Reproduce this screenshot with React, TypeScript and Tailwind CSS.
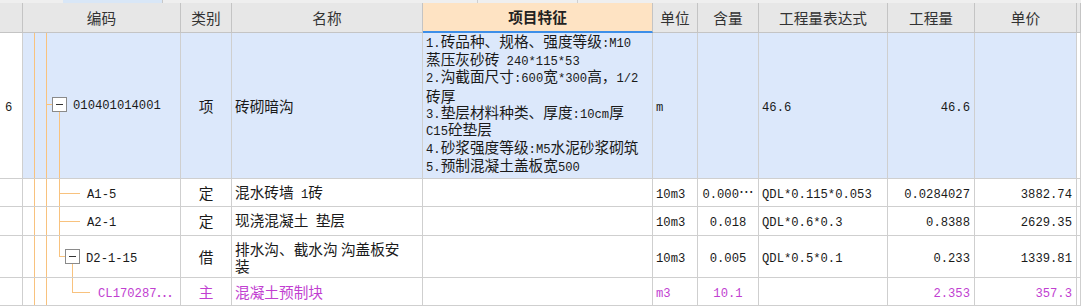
import React from 'react'

const ORANGE = '#f8c27e'

// ASCII runs in a narrow mono face, CJK in Noto Sans CJK, like SimSun's half/full widths
const Tx = ({ s }: { s: string }) => (
    <span>
        {s.split(/([\x20-\x7e]+)/).map((p, i) =>
            /^[\x20-\x7e]+$/.test(p) ? (
                <span key={i} className="font-['Liberation_Mono'] text-[12.2px] whitespace-pre">
                    {p}
                </span>
            ) : (
                <span key={i}>{p}</span>
            )
        )}
    </span>
)

const head = 'border-r border-b border-[#c4c4c4] bg-[#e7e7e7] flex items-center justify-center text-[#333]'
const cell = 'border-r border-b border-[#cfcfcf] flex items-center overflow-hidden whitespace-nowrap'

const Box = ({ x, y }: { x: number; y: number }) => (
    <>
        <rect x={x + 0.5} y={y + 0.5} width={14} height={14} fill="#fff" stroke="#8a8a8a" />
        <line x1={x + 4} y1={y + 7.5} x2={x + 11} y2={y + 7.5} stroke="#333" />
    </>
)

const Tree = ({ h, children }: { h: number; children?: React.ReactNode }) => (
    <svg className="absolute inset-0" width={158} height={h}>
        <line x1={11.5} y1={0} x2={11.5} y2={h} stroke={ORANGE} />
        <line x1={23.5} y1={0} x2={23.5} y2={h} stroke={ORANGE} />
        {children}
    </svg>
)

const features = [
    '1.砖品种、规格、强度等级:M10',
    '蒸压灰砂砖 240*115*53',
    '2.沟截面尺寸:600宽*300高，1/2',
    '砖厚',
    '3.垫层材料种类、厚度:10cm厚',
    'C15砼垫层',
    '4.砂浆强度等级:M5水泥砂浆砌筑',
    '5.预制混凝土盖板宽500',
]

const subRows = [
    { code: 'A1-5', kind: '定', name: '混水砖墙 1砖', unit: '10m3', amt: '0.000⋯', expr: 'QDL*0.115*0.053', qty: '0.0284027', price: '3882.74' },
    { code: 'A2-1', kind: '定', name: '现浇混凝土 垫层', unit: '10m3', amt: '0.018', expr: 'QDL*0.6*0.3', qty: '0.8388', price: '2629.35' },
]

export default function App() {
    return (
        <div className="w-[1081px] h-[306px] overflow-hidden bg-white text-[14.67px] text-[#1a1a1a] font-['Noto_Sans_CJK_SC',sans-serif] grid grid-cols-[23px_158px_51px_191px_230px_45px_61px_129px_87px_102px_4px] grid-rows-[3px_30px_146px_28px_29px_42px_28px]">
            {/* tab strip */}
            <div className="col-span-11 flex bg-[#efefef]">
                <div className="w-[63px]" />
                <div className="w-[100px] bg-[#d9e7f7] border-r border-[#c8c8c8]" />
                <div className="w-[315px] border-r border-[#d0d0d0]" />
                <div className="w-[100px] border-r border-[#d0d0d0]" />
                <div className="flex-1" />
            </div>

            {/* header */}
            <div className={head} />
            <div className={head}>编码</div>
            <div className={head}>类别</div>
            <div className={head}>名称</div>
            <div className="border-r border-b-2 border-r-[#c4c4c4] border-b-[#3d8ee8] bg-[#fee3c3] flex items-center justify-center font-bold text-[#222]">项目特征</div>
            <div className={head}>单位</div>
            <div className={head}>含量</div>
            <div className={head}>工程量表达式</div>
            <div className={head}>工程量</div>
            <div className={head}>单价</div>
            <div className={head} />

            {/* row 6 */}
            <div className={`${cell} pl-[5px]`}>
                <Tx s="6" />
            </div>
            <div className={`${cell} relative bg-[#dce8fb]`}>
                <Tree h={146}>
                    <line x1={23} y1={71.5} x2={29} y2={71.5} stroke={ORANGE} />
                    <line x1={36.5} y1={79} x2={36.5} y2={146} stroke={ORANGE} />
                    <Box x={29} y={64} />
                </Tree>
                <span className="relative pl-[50px] pb-[3px]">
                    <Tx s="010401014001" />
                </span>
            </div>
            <div className={`${cell} justify-center bg-[#dce8fb]`}>项</div>
            <div className={`${cell} pl-[3px] bg-[#dce8fb]`}>砖砌暗沟</div>
            <div className={`${cell} pl-[3px] pt-[1px] bg-[#dce8fb] flex-col items-start justify-start`}>
                {features.map((f) => (
                    <div key={f} className="h-[17.7px] leading-[17.7px] flex items-center">
                        <Tx s={f} />
                    </div>
                ))}
            </div>
            <div className={`${cell} pl-[3px] bg-[#dce8fb]`}>
                <Tx s="m" />
            </div>
            <div className={`${cell} bg-[#dce8fb]`} />
            <div className={`${cell} pl-[3px] bg-[#dce8fb]`}>
                <Tx s="46.6" />
            </div>
            <div className={`${cell} justify-end pr-[4px] bg-[#dce8fb]`}>
                <Tx s="46.6" />
            </div>
            <div className={`${cell} bg-[#dce8fb]`} />
            <div className={cell} />

            {/* quota rows */}
            {subRows.map((r, i) => (
                <React.Fragment key={r.code}>
                    <div className={cell} />
                    <div className={`${cell} relative`}>
                        <Tree h={i === 0 ? 28 : 29}>
                            <line x1={36.5} y1={0} x2={36.5} y2={29} stroke={ORANGE} />
                            <line x1={36} y1={14.5} x2={57} y2={14.5} stroke={ORANGE} />
                        </Tree>
                        <span className="relative pl-[64px]">
                            <Tx s={r.code} />
                        </span>
                    </div>
                    <div className={`${cell} justify-center`}>{r.kind}</div>
                    <div className={`${cell} pl-[3px]`}>
                        <Tx s={r.name} />
                    </div>
                    <div className={cell} />
                    <div className={`${cell} pl-[3px]`}>
                        <Tx s={r.unit} />
                    </div>
                    <div className={`${cell} justify-center`}>
                        <Tx s={r.amt} />
                    </div>
                    <div className={`${cell} pl-[3px]`}>
                        <Tx s={r.expr} />
                    </div>
                    <div className={`${cell} justify-end pr-[4px]`}>
                        <Tx s={r.qty} />
                    </div>
                    <div className={`${cell} justify-end pr-[4px]`}>
                        <Tx s={r.price} />
                    </div>
                    <div className={cell} />
                </React.Fragment>
            ))}

            {/* borrowed quota */}
            <div className={cell} />
            <div className={`${cell} relative`}>
                <Tree h={42}>
                    <line x1={36.5} y1={0} x2={36.5} y2={21} stroke={ORANGE} />
                    <line x1={36} y1={20.5} x2={42} y2={20.5} stroke={ORANGE} />
                    <line x1={49.5} y1={28} x2={49.5} y2={42} stroke={ORANGE} />
                    <Box x={42} y={13} />
                </Tree>
                <span className="relative pl-[63px]">
                    <Tx s="D2-1-15" />
                </span>
            </div>
            <div className={`${cell} justify-center`}>借</div>
            <div className={`${cell} pl-[3px] flex-col items-start justify-center`}>
                <div className="h-[17px] leading-[17px]">排水沟、截水沟 沟盖板安</div>
                <div className="h-[17px] leading-[17px]">装</div>
            </div>
            <div className={cell} />
            <div className={`${cell} pl-[3px]`}>
                <Tx s="10m3" />
            </div>
            <div className={`${cell} justify-center`}>
                <Tx s="0.005" />
            </div>
            <div className={`${cell} pl-[3px]`}>
                <Tx s="QDL*0.5*0.1" />
            </div>
            <div className={`${cell} justify-end pr-[4px]`}>
                <Tx s="0.233" />
            </div>
            <div className={`${cell} justify-end pr-[4px]`}>
                <Tx s="1339.81" />
            </div>
            <div className={cell} />

            {/* main material */}
            <div className={cell} />
            <div className={`${cell} relative text-[#c13fd1]`}>
                <Tree h={28}>
                    <line x1={49.5} y1={0} x2={49.5} y2={14.5} stroke={ORANGE} />
                    <line x1={49} y1={14.5} x2={67} y2={14.5} stroke={ORANGE} />
                </Tree>
                <span className="relative pl-[75px]">
                    <Tx s="CL170287⋯" />
                </span>
            </div>
            <div className={`${cell} justify-center text-[#c13fd1]`}>主</div>
            <div className={`${cell} pl-[3px] text-[#c13fd1]`}>混凝土预制块</div>
            <div className={cell} />
            <div className={`${cell} pl-[3px] text-[#c13fd1]`}>
                <Tx s="m3" />
            </div>
            <div className={`${cell} justify-center text-[#c13fd1]`}>
                <Tx s="10.1" />
            </div>
            <div className={cell} />
            <div className={`${cell} justify-end pr-[4px] text-[#c13fd1]`}>
                <Tx s="2.353" />
            </div>
            <div className={`${cell} justify-end pr-[4px] text-[#c13fd1]`}>
                <Tx s="357.3" />
            </div>
            <div className={cell} />
        </div>
    )
}
